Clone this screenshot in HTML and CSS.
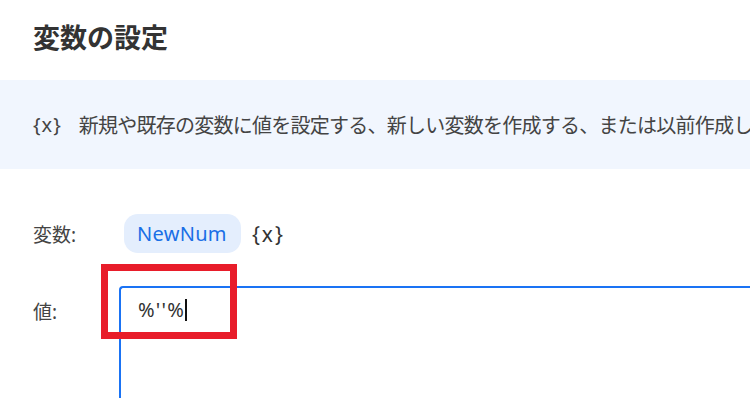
FILE: index.html
```html
<!DOCTYPE html>
<html lang="ja">
<head>
  <meta charset="UTF-8">
  <title>変数の設定</title>
  <link rel="stylesheet" href="styles.css">
</head>
<body>

  <h1 class="title">変数の設定</h1>

  <div class="banner">
    <span class="banner-icon">{x}</span>
    <span class="banner-text">新規や既存の変数に値を設定する、新しい変数を作成する、または以前作成した変数を上書きします</span>
  </div>

  <div class="form">
    <div class="row row-var">
      <span class="label">変数:</span>
      <div class="value">
        <span class="chip">NewNum</span>
        <span class="var-icon">{x}</span>
      </div>
    </div>

    <div class="row row-val">
      <span class="label">値:</span>
      <div class="field">
        <span class="field-text">%''%</span><span class="caret"></span>
        <div class="highlight"></div>
      </div>
    </div>
  </div>

</body>
</html>
```

FILE: styles.css
```css
body {
  margin: 0;
  font-family: "Noto Sans", "Noto Sans CJK JP", sans-serif;
  background-color: #ffffff;
  overflow: hidden;
}

.title {
  margin: 0;
  height: 80px;
  padding-left: 33px;
  font-size: 27px;
  font-weight: bold;
  line-height: 76px;
  color: #333333;
}

.banner {
  display: flex;
  align-items: center;
  height: 89px;
  padding-left: 33px;
  background-color: #f1f6fe;
  color: #444444;
  font-size: 20px;
  white-space: nowrap;
  overflow: hidden;
}

.banner-icon {
  margin-right: 17px;
  letter-spacing: 1px;
}

.banner-text {
  letter-spacing: -0.75px;
}

.form {
  padding-top: 45px;
}

.row {
  display: flex;
  padding-left: 33px;
}

.label {
  width: 86px;
  flex-shrink: 0;
  font-size: 19px;
  color: #444444;
}

.row-var {
  align-items: center;
  height: 39px;
}

.value {
  display: flex;
  align-items: center;
  gap: 11px;
  padding-left: 5px;
}

.chip {
  height: 39px;
  padding: 0 14px 0 13px;
  border-radius: 14px;
  background-color: #e4eefd;
  color: #1a6fe6;
  font-size: 20px;
  letter-spacing: 0.3px;
  line-height: 39px;
}

.var-icon {
  font-size: 21px;
  letter-spacing: 2px;
  color: #333333;
}

.row-val {
  margin-top: 33px;
}

.row-val .label {
  padding-top: 11px;
}

.field {
  position: relative;
  flex: 1;
  height: 102px;
  padding: 8px 0 0 17px;
  border-top: 2px solid #1a73f4;
  border-left: 2px solid #1a73f4;
  border-top-left-radius: 4px;
  font-size: 20px;
  line-height: 28px;
  color: #333333;
}

.field-text {
  letter-spacing: 1.2px;
}

.caret {
  display: inline-block;
  width: 0;
  height: 22px;
  border-left: 2px solid #111111;
  vertical-align: -4px;
}

.highlight {
  position: absolute;
  left: -20px;
  top: -24px;
  width: 122px;
  height: 61px;
  border: 7px solid #e81d2a;
}
```
